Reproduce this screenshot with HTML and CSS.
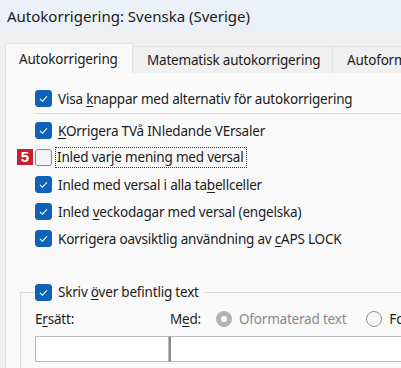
FILE: index.html
```html
<!DOCTYPE html>
<html lang="sv">

<head>
    <meta charset="UTF-8">
    <meta name="viewport" content="width=device-width, initial-scale=1.0">
    <title>Autokorrigering: Svenska (Sverige)</title>
    <link rel="stylesheet" href="styles.css">
</head>

<body>
    <div class="titlebar">Autokorrigering: Svenska (Sverige)</div>

    <div class="dialog">
        <div class="tabs">
            <div class="tab active">Autokorrigering</div>
            <div class="tab">Matematisk autokorrigering</div>
            <div class="tab">Autoformat vid inskrivning</div>
        </div>

        <div class="panel">
            <div class="option">
                <span class="check checked"><svg viewBox="0 0 16 16"><path d="M4.2 8.3 L6.9 10.9 L11.8 5.6" /></svg></span>
                <span>Visa <u>k</u>nappar med alternativ för autokorrigering</span>
            </div>

            <div class="separator"></div>

            <div class="option">
                <span class="check checked"><svg viewBox="0 0 16 16"><path d="M4.2 8.3 L6.9 10.9 L11.8 5.6" /></svg></span>
                <span><u>K</u>Orrigera TVå INledande VErsaler</span>
            </div>
            <div class="option">
                <span class="badge">5</span>
                <span class="check"></span>
                <span class="focused">Inled var<u>j</u>e mening med versal</span>
            </div>
            <div class="option">
                <span class="check checked"><svg viewBox="0 0 16 16"><path d="M4.2 8.3 L6.9 10.9 L11.8 5.6" /></svg></span>
                <span>Inled med versal i alla ta<u>b</u>ellceller</span>
            </div>
            <div class="option">
                <span class="check checked"><svg viewBox="0 0 16 16"><path d="M4.2 8.3 L6.9 10.9 L11.8 5.6" /></svg></span>
                <span>Inled <u>v</u>eckodagar med versal (engelska)</span>
            </div>
            <div class="option">
                <span class="check checked"><svg viewBox="0 0 16 16"><path d="M4.2 8.3 L6.9 10.9 L11.8 5.6" /></svg></span>
                <span>Korrigera oavsiktlig användning av <u>c</u>APS LOCK</span>
            </div>

            <fieldset class="replace-group">
                <legend class="option">
                    <span class="check checked"><svg viewBox="0 0 16 16"><path d="M4.2 8.3 L6.9 10.9 L11.8 5.6" /></svg></span>
                    <span>Skriv <u>ö</u>ver befintlig text</span>
                </legend>

                <div class="replace-labels">
                    <span class="label-replace">E<u>r</u>sätt:</span>
                    <span class="label-with">M<u>e</u>d:</span>
                    <span class="radio selected disabled"></span>
                    <span class="muted">Oformaterad text</span>
                    <span class="radio"></span>
                    <span>Formaterad text</span>
                </div>

                <div class="replace-inputs">
                    <input type="text" class="input-replace">
                    <input type="text" class="input-with">
                </div>
            </fieldset>
        </div>
    </div>
</body>

</html>
```

FILE: styles.css
```css
body {
    font-family: "Noto Sans", "Open Sans", sans-serif;
    font-size: 13.5px;
    letter-spacing: -0.2px;
    color: #1b1b1b;
    margin: 0;
    padding: 0;
    background-color: #f0f0f0;
    overflow: hidden;
    width: 401px;
    height: 368px;
}

u {
    text-decoration-thickness: 1px;
    text-underline-offset: 2px;
}

.titlebar {
    height: 33px;
    line-height: 33px;
    padding-left: 7px;
    font-size: 15px;
    letter-spacing: 0;
    background-color: #eaf0f6;
    white-space: nowrap;
}

.dialog {
    padding: 11px 0 0 5px;
    width: 600px;
}

.tabs {
    display: flex;
    align-items: flex-end;
    height: 29px;
}

.tab {
    height: 26px;
    line-height: 26px;
    padding: 0 14px;
    border: 1px solid #e3e3e3;
    border-bottom: none;
    border-left: none;
    background-color: #f0f0f0;
    white-space: nowrap;
}

.tab.active {
    height: 29px;
    line-height: 30px;
    width: 100px;
    padding: 0 13px;
    border-left: 1px solid #e3e3e3;
    background-color: #f9f9f9;
    position: relative;
    z-index: 1;
}

.tab:nth-child(2) {
    width: 171px;
}

.panel {
    background-color: #f9f9f9;
    border-left: 1px solid #e3e3e3;
    border-top: 1px solid #e3e3e3;
    margin-top: -1px;
    padding: 12px 0 0 29px;
    height: 290px;
}

.option {
    display: flex;
    align-items: center;
    gap: 6px;
    height: 27px;
    white-space: nowrap;
    position: relative;
}

.check {
    width: 15px;
    height: 15px;
    border: 1px solid #8a8a8a;
    border-radius: 3px;
    background-color: #f3f3f3;
    flex-shrink: 0;
    display: flex;
}

.check.checked {
    border-color: #0f62b5;
    background-color: #0f62b5;
}

.check svg {
    width: 15px;
    height: 15px;
    fill: none;
    stroke: #fff;
    stroke-width: 1.1;
}

.separator {
    height: 1px;
    background-color: #dedede;
    margin: 1px 0 3px 0;
}

.badge {
    position: absolute;
    left: -18px;
    top: 5px;
    width: 16px;
    height: 16px;
    background-color: #c81f32;
    color: #fff;
    font-family: "Liberation Sans", sans-serif;
    font-weight: bold;
    font-size: 15px;
    letter-spacing: 0;
    line-height: 16px;
    text-align: center;
}

.focused {
    outline: 1px dotted #333;
    padding: 0 2px 1px 1px;
    margin-left: -2px;
}

.replace-group {
    margin: 28px 0 0 -15px;
    padding: 0 0 0 14px;
    border: 1px solid #dcdcdc;
    border-right: none;
    height: 100px;
}

.replace-group legend {
    padding: 0 5px 0 0;
    height: 24px;
}

.replace-labels {
    display: flex;
    align-items: center;
    height: 28px;
    margin-top: 1px;
    white-space: nowrap;
}

.label-replace {
    width: 135px;
}

.label-with {
    width: 46px;
}

.radio {
    width: 14px;
    height: 14px;
    border: 1px solid #8f8f8f;
    border-radius: 50%;
    background-color: #f7f7f7;
    margin-right: 7px;
    flex-shrink: 0;
}

.radio.selected.disabled {
    width: 6px;
    height: 6px;
    border: 5px solid #b3b3b3;
    background-color: #fff;
}

.muted {
    color: #8a8a8a;
    margin-right: 20px;
}

.replace-inputs {
    display: flex;
    margin-top: 3px;
}

.replace-inputs input {
    height: 24px;
    border: 1px solid #b9b9b9;
    background-color: #fff;
    padding: 0;
    margin: 0;
    box-sizing: content-box;
}

.input-replace {
    width: 132px;
}

.input-with {
    width: 300px;
    border-left: 2px solid #8c8c8c !important;
}
```
